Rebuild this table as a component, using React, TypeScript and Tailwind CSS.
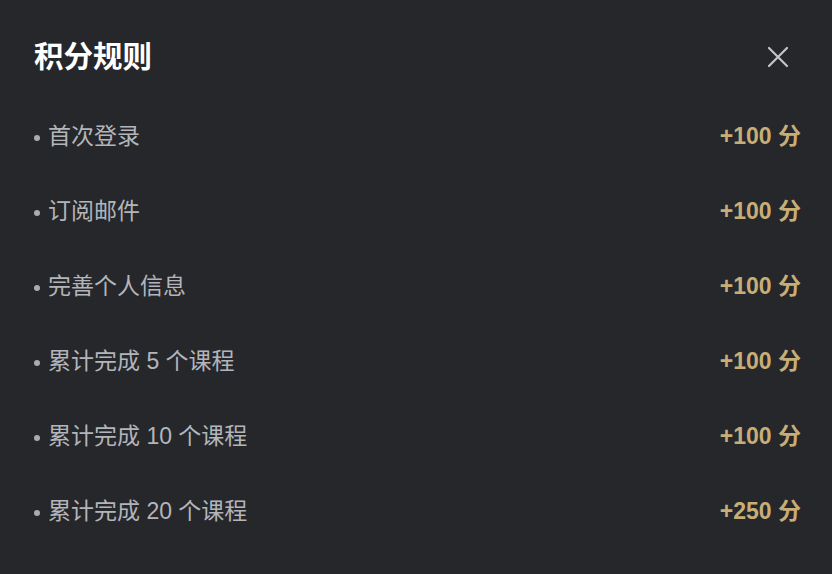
import React from "react";

const rows: [string, string][] = [
  ["首次登录", "+100 分"],
  ["订阅邮件", "+100 分"],
  ["完善个人信息", "+100 分"],
  ["累计完成 5 个课程", "+100 分"],
  ["累计完成 10 个课程", "+100 分"],
  ["累计完成 20 个课程", "+250 分"],
];

export default function App() {
  return (
    <div
      className="w-[832px] h-[574px] bg-[#25272b] pt-[39px] pl-[34px] pr-[31px] overflow-hidden"
      style={{ fontFamily: '"Liberation Sans", "Noto Sans CJK SC", sans-serif' }}
    >
      <div className="h-[36px] flex items-center justify-between">
        <h1 className="text-[29.5px] font-bold text-white leading-none">积分规则</h1>
        <svg width="22" height="22" viewBox="0 0 22 22" className="mr-[12px]" fill="none">
          <path d="M2 2 L20 20 M20 2 L2 20" stroke="#c4c5c8" strokeWidth="2.2" strokeLinecap="round" />
        </svg>
      </div>
      <div className="mt-[24px]">
        {rows.map(([label, pts], i) => (
          <div key={i} className="h-[75px] flex items-center justify-between">
            <div className="flex items-center text-[23px] text-[#b3b5ba]">
              <span className="w-[6px] h-[6px] rounded-full bg-[#a9abb0] mr-[8px] mt-[2px]" />
              <span>{label}</span>
            </div>
            <span className="text-[23px] font-bold text-[#c8ae76]">{pts}</span>
          </div>
        ))}
      </div>
    </div>
  );
}
